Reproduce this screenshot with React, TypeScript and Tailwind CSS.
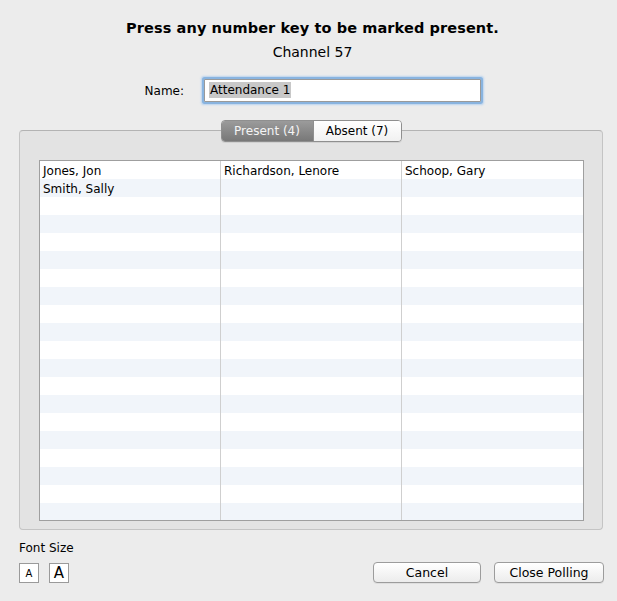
import { useState } from "react";

const present = [
  ["Jones, Jon", "Richardson, Lenore", "Schoop, Gary"],
  ["Smith, Sally", "", ""],
];

const ROWS = 20;

export default function App() {
  const [tab, setTab] = useState<"present" | "absent">("present");
  const font = { fontFamily: '"DejaVu Sans", "Liberation Sans", sans-serif' };

  return (
    <div
      className="w-[617px] h-[601px] bg-[#ececec] text-black flex flex-col overflow-hidden"
      style={font}
    >
      {/* header */}
      <div className="pt-[18px] pl-[8px] flex flex-col items-center">
        <div className="text-[14.5px] font-bold leading-[20px] tracking-[0.1px]">
          Press any number key to be marked present.
        </div>
        <div className="mt-[4px] text-[14px] leading-[20px]">Channel 57</div>
      </div>

      {/* name field */}
      <div className="mt-[16px] flex items-center h-[24px]">
        <div className="w-[185px] text-right text-[12px] pr-[1px] pt-[1px]">Name:</div>
        <div className="ml-[19px] w-[277px] h-[23px] bg-white border border-[#9a9a9a] rounded-[1px] shadow-[0_0_0_2px_#89b4e0,0_0_2px_3px_#b9d3ef] flex items-center px-[4px]">
          <span className="bg-[#c8c8c8] text-[12px] leading-[16px] px-[1px]">Attendance 1</span>
        </div>
      </div>

      {/* tab view */}
      <div className="mt-[18px] relative ml-[19px] mr-[14px]">
        <div className="relative z-10 flex justify-center h-[22px] -mb-[12px]">
          <div className="flex rounded-[4px] border border-[#8f8f8f] overflow-hidden shadow-[0_1px_0_rgba(0,0,0,0.08)] text-[12px]">
            <button
              onClick={() => setTab("present")}
              className={`w-[91px] leading-[20px] text-center ${
                tab === "present"
                  ? "bg-gradient-to-b from-[#9b9b9b] to-[#787878] text-[#f4f4f4]"
                  : "bg-gradient-to-b from-white to-[#f1f1f1] text-black"
              }`}
            >
              Present (4)
            </button>
            <button
              onClick={() => setTab("absent")}
              className={`w-[88px] leading-[20px] text-center border-l border-[#8f8f8f] ${
                tab === "absent"
                  ? "bg-gradient-to-b from-[#9b9b9b] to-[#787878] text-[#f4f4f4]"
                  : "bg-gradient-to-b from-white to-[#f1f1f1] text-black"
              }`}
            >
              Absent (7)
            </button>
          </div>
        </div>
        <div className="h-[400px] bg-[#e3e3e3] border border-[#c4c4c4] border-t-[#b3b3b3] rounded-[4px] pt-[29px] pl-[19px] pr-[18px]">
          <div className="h-[361px] bg-white border border-[#9f9f9f] overflow-hidden">
            {Array.from({ length: ROWS }).map((_, r) => {
              const cells = tab === "present" ? present[r] ?? ["", "", ""] : ["", "", ""];
              return (
                <div
                  key={r}
                  className={`grid grid-cols-[181px_181px_1fr] h-[18px] ${
                    r % 2 === 1 ? "bg-[#f1f5fa]" : "bg-white"
                  }`}
                >
                  {cells.map((c, i) => (
                    <div
                      key={i}
                      className={`text-[12px] leading-[20px] pl-[3px] whitespace-nowrap overflow-hidden ${
                        i < 2 ? "border-r border-[#cfcfcf]" : ""
                      }`}
                    >
                      {c}
                    </div>
                  ))}
                </div>
              );
            })}
          </div>
        </div>
      </div>

      {/* footer */}
      <div className="mt-[9px] ml-[19px] mr-[13px] flex items-end justify-between">
        <div className="flex flex-col">
          <div className="text-[12px] leading-[16px] pt-[1px]">Font Size</div>
          <div className="mt-[7px] flex gap-[10px]">
            <button className="w-[20px] h-[20px] border border-[#9a9a9a] bg-white flex items-center justify-center text-[10px]">
              A
            </button>
            <button className="w-[20px] h-[20px] border border-[#9a9a9a] bg-white flex items-center justify-center text-[15px]">
              A
            </button>
          </div>
        </div>
        <div className="flex gap-[13px]">
          <button className="w-[108px] h-[21px] rounded-[4px] border border-[#9c9c9c] bg-gradient-to-b from-white to-[#ececec] text-[12.5px] leading-[19px] shadow-[0_1px_0_rgba(0,0,0,0.06)]">
            Cancel
          </button>
          <button className="w-[110px] h-[21px] rounded-[4px] border border-[#9c9c9c] bg-gradient-to-b from-white to-[#ececec] text-[12.5px] leading-[19px] shadow-[0_1px_0_rgba(0,0,0,0.06)]">
            Close Polling
          </button>
        </div>
      </div>
    </div>
  );
}
